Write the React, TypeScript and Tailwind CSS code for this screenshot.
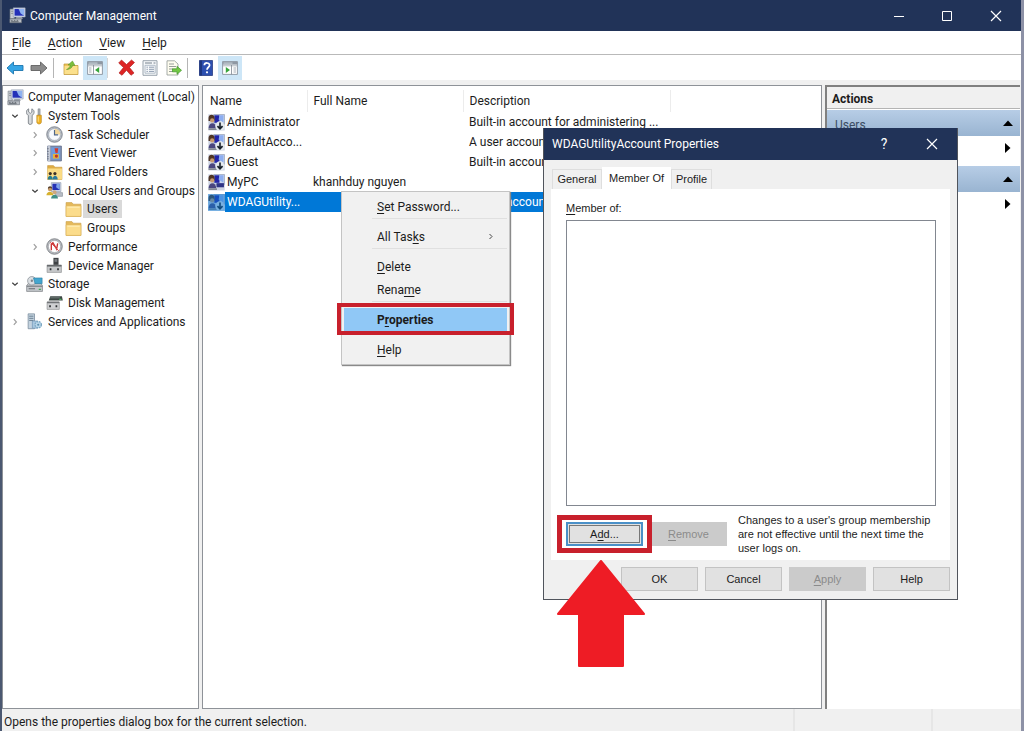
import React from "react";

type IconProps = { className?: string };

function ComputerIcon({ className = "size-4" }: IconProps) {
  return (
    <svg viewBox="0 0 16 16" className={className} aria-hidden="true">
      <path d="M1 2h4v9H1z" fill="#c9cdd2" stroke="#7d838c" strokeWidth=".6" />
      <path d="M2 4h2M2 6h2" stroke="#6f7680" strokeWidth=".7" />
      <path d="M4 .8h11.2v8.6H4z" fill="#dfe6f0" stroke="#8f9bb0" strokeWidth=".6" />
      <path d="M5.2 1.8h9v6.4h-9z" fill="#2430b8" />
      <path d="M9 1.8h5.2v6.4L11 6z" fill="#8fb3f0" />
      <path d="M7 9.4h5l1 2H6z" fill="#9aa1ab" />
      <path d="M.8 11.2h11v3.6H.8z" fill="#b8bdc4" stroke="#6b717a" strokeWidth=".6" />
      <path d="M2 12.6h1.4M4.6 12.6H6M7.2 12.6h1.4M2 13.8h7" stroke="#4c525b" strokeWidth=".7" />
    </svg>
  );
}

function ToolsIcon({ className = "size-4" }: IconProps) {
  return (
    <svg viewBox="0 0 16 16" className={className} aria-hidden="true">
      <path d="M2.500.8v3l1.500 1.300 1.500-1.300v-3C7 1.500 7.800 2.700 7.600 4.200 7.400 5.600 6.800 6.400 5.800 6.900v7.300c0 1.700-3.600 1.700-3.600 0V6.900C1.200 6.400.5 5.600.4 4.200.3 2.700 1 1.400 2.500.8z" fill="#d6d9dc" stroke="#757c82" strokeWidth=".8" />
      <path d="M11.300.8h2v6h-2z" fill="#a9afb5" stroke="#7f868c" strokeWidth=".5" />
      <path d="M10.200 6.800h4.200v6.400c0 2.400-4.200 2.400-4.200 0z" fill="#f0b323" stroke="#b47d12" strokeWidth=".6" />
      <path d="M11.500 8v5" stroke="#ffe08a" strokeWidth=".9" />
    </svg>
  );
}

function ClockIcon({ className = "size-4" }: IconProps) {
  return (
    <svg viewBox="0 0 16 16" className={className} aria-hidden="true">
      <circle cx="8" cy="8" r="7.300" fill="#b7bdc6" stroke="#757b84" strokeWidth=".8" />
      <circle cx="8" cy="8" r="5.500" fill="#f7fafe" stroke="#9aa2ad" strokeWidth=".5" />
      <path d="M8 8V2.500A5.500 5.500 0 0 1 13.500 8z" fill="#f2d79b" />
      <path d="M8 3.800V8.400h3.400" fill="none" stroke="#4f6788" strokeWidth="1.100" />
    </svg>
  );
}

function EventIcon({ className = "size-4" }: IconProps) {
  return (
    <svg viewBox="0 0 16 16" className={className} aria-hidden="true">
      <path d="M1.500 1h13v14h-13z" fill="#8190b0" stroke="#5b6885" strokeWidth=".7" />
      <path d="M1.500 1h2.500v14H1.500z" fill="#c6ccd8" />
      <path d="M5 2.200h8.300v11.500H5z" fill="#6d9be0" />
      <path d="M8 3h3.500l-.6 4.600H9z" fill="#d13a2c" />
      <path d="M6.500 8.500h5.600v4.300H6.500z" fill="#e7b53a" />
      <circle cx="9.800" cy="10.400" r="1.500" fill="#c2332a" />
      <path d="M1 3.500h1.600M1 6h1.600M1 8.500h1.600M1 11h1.600M1 13h1.600" stroke="#59606e" strokeWidth=".7" />
    </svg>
  );
}

function FolderIcon({ className = "size-4" }: IconProps) {
  return (
    <svg viewBox="0 0 16 16" className={className} aria-hidden="true">
      <path d="M1 1.500h5.500l1.300 1.500H15v11.500H1z" fill="#e5b95a" stroke="#c9a04c" strokeWidth=".6" />
      <path d="M1 4.500h14v10H1z" fill="#fbdc8b" stroke="#dcb053" strokeWidth=".5" />
      <path d="M2.200 5.800h11.600" stroke="#fff0bd" strokeWidth=".9" />
    </svg>
  );
}

function SharedIcon({ className = "size-4" }: IconProps) {
  return (
    <svg viewBox="0 0 16 16" className={className} aria-hidden="true">
      <path d="M1.500 1.500H7L8.500 3H15v11.500H1.500z" fill="#dfae45" stroke="#c39238" strokeWidth=".5" />
      <path d="M1.500 4.200H15v10.300H1.500z" fill="#fbdc85" />
      <circle cx="4" cy="9" r="1.500" fill="#3c3128" />
      <circle cx="8.400" cy="9" r="1.500" fill="#3c3128" />
      <path d="M1.600 14.600c0-4.600 4.700-4.600 4.700 0z" fill="#287d8c" />
      <path d="M6.200 14.600c0-4.600 4.800-4.600 4.800 0z" fill="#2b7aa0" />
    </svg>
  );
}

function UsersIcon({ className = "size-4" }: IconProps) {
  return (
    <svg viewBox="0 0 16 16" className={className} aria-hidden="true">
      <path d="M5 .6h9v8.400H5z" fill="#d7dfec" stroke="#8994aa" strokeWidth=".6" />
      <path d="M6 1.600h7v6H6z" fill="#2531b5" />
      <path d="M10 1.600h3v6L9.500 5z" fill="#7da2e8" />
      <path d="M9 10h6.500v3.500H9z" fill="#b9bec7" stroke="#777e8a" strokeWidth=".5" />
      <circle cx="3.800" cy="6.700" r="2.100" fill="#c49a6b" />
      <path d="M1.800 6.300c0-3 4-3 4 0L3.800 5.300z" fill="#503a28" />
      <path d="M.4 12.500c0-4.500 6.600-4.500 6.600 0z" fill="#d6b12f" />
      <circle cx="8" cy="9.600" r="1.900" fill="#cda77d" />
      <path d="M4.800 15.500c0-4.800 6.500-4.800 6.500 0z" fill="#3f8f86" />
    </svg>
  );
}

function PerformanceIcon({ className = "size-4" }: IconProps) {
  return (
    <svg viewBox="0 0 16 16" className={className} aria-hidden="true">
      <circle cx="8" cy="8" r="7.300" fill="#b9bcc1" stroke="#777b80" strokeWidth=".8" />
      <circle cx="8" cy="8" r="5.700" fill="#fff" stroke="#909499" strokeWidth=".5" />
      <path d="M5 11.500V5.500l1.500-1L10 10.500l1-5.500" fill="none" stroke="#c93434" strokeWidth="1.300" />
      <path d="M4 4l8 8" stroke="#d44" strokeWidth=".9" />
    </svg>
  );
}

function DeviceIcon({ className = "size-4" }: IconProps) {
  return (
    <svg viewBox="0 0 16 16" className={className} aria-hidden="true">
      <path d="M7 .8h4.800v7H7z" fill="#3f4245" />
      <path d="M8 2h2.600v2.500H8z" fill="#777b80" />
      <path d="M1 7.500h13.500v7H1z" fill="#c6c8ca" stroke="#8a8d90" strokeWidth=".6" />
      <path d="M1 7.500h13.500V9H1z" fill="#66696c" />
      <path d="M3.500 10.500h1.600v2H3.500zM10.500 10.500h1.600v2h-1.600z" fill="#2f3235" />
    </svg>
  );
}

function StorageIcon({ className = "size-4" }: IconProps) {
  return (
    <svg viewBox="0 0 16 16" className={className} aria-hidden="true">
      <path d="M.6 9l2-2.500h10.900l2 2.500v5.500H.6z" fill="#c3c6ca" stroke="#74787d" strokeWidth=".6" />
      <path d="M.8 9.600h14.500" stroke="#6b7075" strokeWidth=".9" />
      <path d="M2.500 12h6" stroke="#60666c" strokeWidth=".9" />
      <circle cx="5.500" cy="4.500" r="4" fill="#dce0e4" stroke="#878d94" strokeWidth=".7" />
      <circle cx="5.500" cy="4.500" r="1.100" fill="#7e858c" />
      <path d="M7 1.800h8.200v5.400H8.500z" fill="#43a6cf" stroke="#267799" strokeWidth=".5" />
      <path d="M12 12h2v1.200h-2z" fill="#3caa57" />
    </svg>
  );
}

function DiskIcon({ className = "size-4" }: IconProps) {
  return (
    <svg viewBox="0 0 16 16" className={className} aria-hidden="true">
      <path d="M4 2h11l.8 4H2.500z" fill="#3d4744" />
      <path d="M4 3.600h9" stroke="#83918c" strokeWidth=".7" />
      <path d="M12.500 4.500h2v1h-2z" fill="#52c46b" />
      <path d="M1 7.500h11.500v7H1z" fill="#cfd0d2" stroke="#8a8d90" strokeWidth=".6" />
      <path d="M1 7.200h11.500v1.500H1z" fill="#717477" />
      <path d="M3 10.500h1.600v2H3zM9 10.500h1.600v2H9z" fill="#2f3235" />
    </svg>
  );
}

function ServicesIcon({ className = "size-4" }: IconProps) {
  return (
    <svg viewBox="0 0 16 16" className={className} aria-hidden="true">
      <path d="M2 .8h6v14H2z" fill="#c4d3df" stroke="#75889a" strokeWidth=".7" />
      <path d="M3 3h4M3 5h4M3 7h4" stroke="#5c7285" strokeWidth=".8" />
      <path d="M6 7.500h5v6.800H6z" fill="#a9c8e0" stroke="#6b93b3" strokeWidth=".6" />
      <circle cx="11.500" cy="11" r="3" fill="#b9d7ea" stroke="#7ba6c2" strokeWidth="1.200" strokeDasharray="1.600 .8" />
      <circle cx="11.500" cy="11" r="1" fill="#5f8fae" />
    </svg>
  );
}

function AccountIcon({ disabled, selected }: { disabled?: boolean; selected?: boolean }) {
  return (
    <svg viewBox="0 0 16 16" className="size-[17px] shrink-0" aria-hidden="true">
      <path d="M.3.3h15.400v15.200H.3z" fill="#cdd3e2" />
      <path d="M5.500.5h10v9.500h-10z" fill="#c6d3ee" stroke="#96a0b4" strokeWidth=".6" />
      <path d="M6 1.200h4.800v7.100H6z" fill="#2224a6" />
      <path d="M10.800 1.200h3.700v7.100L10 5.200z" fill="#8daef0" />
      <path d="M8 8.600h7v3.900H8z" fill="#2e3486" />
      <path d="M.5 3.800c0-4 5.700-4 5.700 0v2.700H.5z" fill="#4e3425" />
      <circle cx="3.900" cy="6" r="2" fill="#c79a72" />
      <path d="M.5 13.500c0-6.500 7.200-6.500 7.200 0z" fill="#4a467f" />
      <path d="M.5 13.500h8v1.500h-8z" fill="#7f858f" />
      {disabled && (
        <>
          <circle cx="11.300" cy="11.300" r="4.500" fill="#e4e9ee" />
          <path d="M11.300 8v5.800M8.900 11.400l2.400 2.600 2.400-2.600" fill="none" stroke="#17202b" strokeWidth="1.500" />
        </>
      )}
      {selected && <path d="M0 0h16v16H0z" fill="#0a78d4" opacity=".5" />}
    </svg>
  );
}

function Chevron({ open }: { open?: boolean }) {
  return (
    <svg viewBox="0 0 8 8" className="size-2 shrink-0" aria-hidden="true">
      <path
        d={open ? "M1.300 2.800L4 5.300l2.700-2.500" : "M2.800 1.200L5.400 4 2.800 6.800"}
        fill="none"
        stroke={open ? "#404040" : "#a0a0a0"}
        strokeWidth="1.200"
      />
    </svg>
  );
}

function CloseIcon() {
  return (
    <svg viewBox="0 0 12 12" className="size-3" aria-hidden="true">
      <path d="M1 1l10 10M11 1L1 11" stroke="#fff" strokeWidth="1.200" />
    </svg>
  );
}

type Node = {
  label: string;
  icon: (p: IconProps) => React.ReactElement;
  pad: string;
  open?: boolean;
  leaf?: boolean;
  selected?: boolean;
};

const LEVEL1 = "pl-2";
const LEVEL2 = "pl-7";
const LEVEL3 = "pl-[47px]";

const TREE: Node[] = [
  { label: "System Tools", icon: ToolsIcon, pad: LEVEL1, open: true },
  { label: "Task Scheduler", icon: ClockIcon, pad: LEVEL2 },
  { label: "Event Viewer", icon: EventIcon, pad: LEVEL2 },
  { label: "Shared Folders", icon: SharedIcon, pad: LEVEL2 },
  { label: "Local Users and Groups", icon: UsersIcon, pad: LEVEL2, open: true },
  { label: "Users", icon: FolderIcon, pad: LEVEL3, leaf: true, selected: true },
  { label: "Groups", icon: FolderIcon, pad: LEVEL3, leaf: true },
  { label: "Performance", icon: PerformanceIcon, pad: LEVEL2 },
  { label: "Device Manager", icon: DeviceIcon, pad: LEVEL2, leaf: true },
  { label: "Storage", icon: StorageIcon, pad: LEVEL1, open: true },
  { label: "Disk Management", icon: DiskIcon, pad: LEVEL2, leaf: true },
  { label: "Services and Applications", icon: ServicesIcon, pad: LEVEL1 },
];

const ACCOUNTS = [
  { name: "Administrator", full: "", desc: "Built-in account for administering ...", disabled: true },
  { name: "DefaultAcco...", full: "", desc: "A user account managed by the s...", disabled: true },
  { name: "Guest", full: "", desc: "Built-in account for guest access t...", disabled: true },
  { name: "MyPC", full: "khanhduy nguyen", desc: "", disabled: false },
  { name: "WDAGUtility...", full: "", desc: "A user account managed and use...", disabled: true, selected: true },
];

function Key({ text, at }: { text: string; at: number }) {
  return (
    <span>
      {text.slice(0, at)}
      <span className="underline underline-offset-2">{text[at]}</span>
      {text.slice(at + 1)}
    </span>
  );
}

function TitleBar() {
  return (
    <header className="flex h-[31px] shrink-0 items-center bg-[#213358] pl-[7px] text-white">
      <ComputerIcon className="size-[17px]" />
      <h1 className="ml-1 flex-1">Computer Management</h1>
      <button aria-label="Minimize" className="flex h-full w-12 items-center justify-center">
        <svg viewBox="0 0 12 12" className="size-3"><path d="M1 6.500h10" stroke="#fff" /></svg>
      </button>
      <button aria-label="Maximize" className="flex h-full w-12 items-center justify-center">
        <svg viewBox="0 0 12 12" className="size-3"><path d="M1.500 1.500h9v9h-9z" fill="none" stroke="#fff" /></svg>
      </button>
      <button aria-label="Close" className="flex h-full w-[50px] items-center justify-center">
        <CloseIcon />
      </button>
    </header>
  );
}

function ArrowGlyph({ fill, stroke, d }: { fill: string; stroke: string; d: string }) {
  return (
    <svg viewBox="0 0 18 16" className="h-4 w-[18px]" aria-hidden="true">
      <path d={d} fill={fill} stroke={stroke} strokeWidth=".9" strokeLinejoin="round" />
    </svg>
  );
}

function PaneIcon({ flip }: { flip?: boolean }) {
  return (
    <svg viewBox="0 0 16 16" className="size-4" aria-hidden="true">
      <path d="M.6 1.600h14.800v12.800H.6z" fill="#fff" stroke="#7d8792" strokeWidth=".8" />
      <path d="M.6 1.600h14.800v3H.6z" fill="#8e98a3" />
      <path d="M1.500 3.100h9" stroke="#dbe2e8" strokeWidth=".8" />
      <path d="M.6 5.800h14.800" stroke="#9aa4ae" strokeWidth=".8" />
      {flip ? (
        <>
          <path d="M9.500 5v9.400" stroke="#7d8792" strokeWidth=".8" />
          <path d="M11.500 8h2.500M11.500 10h2.500M11.500 12h2.500" stroke="#7f8a96" strokeWidth=".7" />
          <path d="M3.800 7v6L8 10z" fill="#35a43a" />
        </>
      ) : (
        <>
          <path d="M6.500 5v9.400" stroke="#7d8792" strokeWidth=".8" />
          <path d="M2 8h2.500M2 10h2.500M2 12h2.500" stroke="#7f8a96" strokeWidth=".7" />
          <path d="M12.200 7v6L8 10z" fill="#35a43a" />
        </>
      )}
    </svg>
  );
}

function ToolButton({ label, active, children }: { label: string; active?: boolean; children: React.ReactNode }) {
  return (
    <button
      aria-label={label}
      className={
        active
          ? "flex h-6 w-6 items-center justify-center bg-[#cde6f7]"
          : "flex h-6 w-6 items-center justify-center"
      }
    >
      {children}
    </button>
  );
}

function Toolbar() {
  return (
    <div role="toolbar" className="flex h-[25px] shrink-0 items-center bg-white pl-[1px]">
      <ToolButton label="Back">
        <ArrowGlyph fill="#35a5e5" stroke="#1b75ae" d="M1 8l6.500-6v3.500H17v5H7.500V14z" />
      </ToolButton>
      <ToolButton label="Forward">
        <ArrowGlyph fill="#8b8b8b" stroke="#626262" d="M17 8l-6.500-6v3.500H1v5h9.500V14z" />
      </ToolButton>
      <span className="mr-[5px] ml-[2px] h-5 w-px bg-[#b5b5b5]" />
      <ToolButton label="Up one level">
        <svg viewBox="0 0 16 16" className="size-4">
          <path d="M1 4h5l1.500 1.500H15v9H1z" fill="#eec65c" stroke="#bd9434" strokeWidth=".7" />
          <path d="M1.500 6h13v8h-13z" fill="#fbe08c" />
          <path d="M3.500 9.500c2-.8 3.500-2.500 3.900-4.700L5 5l4.500-4L12 5.500 9.800 5.200C9.200 7.800 6.800 9.500 3.500 9.500z" fill="#7cc03c" stroke="#4f8f24" strokeWidth=".5" />
        </svg>
      </ToolButton>
      <ToolButton label="Show or hide console tree" active><PaneIcon /></ToolButton>
      <span className="mr-[6px] h-5 w-px bg-[#d5d5d5]" />
      <ToolButton label="Delete">
        <svg viewBox="0 0 17 17" className="size-[17px]">
          <path d="M3.500 1L8.500 5.500 13.500 1 16.500 3.500 11.500 8.500 16 14l-3 2.300-4.500-5-4.500 5L1 14l4.500-5.500L.7 4z" fill="#dd2424" stroke="#a81818" strokeWidth=".6" />
        </svg>
      </ToolButton>
      <ToolButton label="Properties">
        <svg viewBox="0 0 16 16" className="size-4">
          <path d="M1 .7h14v14.600H1z" fill="#f7f9fb" stroke="#8d98a4" strokeWidth=".9" />
          <path d="M3 3h7M11.500 3h2" stroke="#75808c" strokeWidth="1" />
          <path d="M3 5.300h10.200v7.900H3z" fill="none" stroke="#a1aebc" strokeWidth=".8" />
          <path d="M4.500 7.200h1.400M7 7.200h5M4.500 9.300h1.400M7 9.300h5M4.500 11.400h1.400M7 11.400h5" stroke="#71839b" strokeWidth=".8" />
        </svg>
      </ToolButton>
      <ToolButton label="Export list">
        <svg viewBox="0 0 16 16" className="size-4">
          <path d="M1 .8h7.500L12 4v11H1z" fill="#fffdf0" stroke="#8f9796" strokeWidth=".8" />
          <path d="M3 4h5M3 6.500h7M3 9h4M3 11.500h4" stroke="#8c9491" strokeWidth=".9" />
          <path d="M6.500 8.800H11V6.300l4.500 4-4.500 4v-2.500H6.500z" fill="#72c843" stroke="#3f932a" strokeWidth=".7" />
        </svg>
      </ToolButton>
      <span className="mr-[6px] ml-[1px] h-5 w-px bg-[#b5b5b5]" />
      <ToolButton label="Help">
        <svg viewBox="0 0 16 16" className="size-4">
          <path d="M1.500.5h13v15h-13z" fill="#2c4fb0" stroke="#1b2f75" strokeWidth=".7" />
          <path d="M1.500.5H4v15H1.500z" fill="#1e367f" />
          <path d="M6.300 5.300c.2-3.200 5.400-3 5.300 0-.1 2-2.600 2-2.600 4.500" fill="none" stroke="#fff" strokeWidth="1.700" />
          <circle cx="9" cy="12.300" r="1.100" fill="#fff" />
        </svg>
      </ToolButton>
      <ToolButton label="Show or hide action pane" active><PaneIcon flip /></ToolButton>
    </div>
  );
}

function Tree() {
  return (
    <nav className="border border-[#8e9298] bg-white">
      <ul className="mt-[2px] grid h-[243px] auto-rows-fr whitespace-nowrap">
        <li className="flex items-center pl-1">
          <ComputerIcon className="size-[17px] shrink-0" />
          <span className="ml-1">Computer Management (Local)</span>
        </li>
        {TREE.map(({ label, icon: Icon, pad, open, leaf, selected }) => (
          <li key={label} className={"flex items-center " + pad}>
            {leaf ? <span className="w-2 shrink-0" /> : <Chevron open={open} />}
            <Icon className="mr-[5px] ml-[7px] size-[17px] shrink-0" />
            <span className={selected ? "-my-px -ml-1 bg-[#d9d9d9] pr-1 pl-1 leading-[18px]" : ""}>{label}</span>
          </li>
        ))}
      </ul>
    </nav>
  );
}

function AccountTable() {
  return (
    <main className="overflow-hidden border border-[#8e9298] bg-white">
      <table className="mt-1 w-full table-fixed border-collapse whitespace-nowrap text-left">
        <colgroup>
          <col className="w-[104px]" />
          <col className="w-[156px]" />
          <col className="w-[207px]" />
          <col />
        </colgroup>
        <thead>
          <tr className="h-[22px]">
            <th className="border-r border-[#ececec] p-0 pl-[7px] font-normal">Name</th>
            <th className="border-r border-[#ececec] p-0 pl-[6px] font-normal">Full Name</th>
            <th className="border-r border-[#ececec] p-0 pl-[6px] font-normal">Description</th>
            <th className="p-0"></th>
          </tr>
        </thead>
        <tbody>
          {ACCOUNTS.map((a) => (
            <tr key={a.name} className="h-5">
              <td className="p-0">
                <div className="flex items-center pl-[5px]">
                  <AccountIcon disabled={a.disabled} selected={a.selected} />
                  <span className={a.selected ? "flex-1 bg-[#0078d7] pl-[2px] leading-5 text-white" : "pl-[2px] leading-5"}>
                    {a.name}
                  </span>
                </div>
              </td>
              <td className={a.selected ? "bg-[#0078d7] p-0" : "p-0 pl-[6px]"}>{a.full}</td>
              <td className={a.selected ? "bg-[#0078d7] p-0 pl-[6px] text-white" : "p-0 pl-[6px]"}>{a.desc}</td>
              <td className="p-0"></td>
            </tr>
          ))}
        </tbody>
      </table>
    </main>
  );
}

function ActionHeading({ children }: { children?: React.ReactNode }) {
  return (
    <button className="flex h-[26px] w-full items-center justify-between bg-linear-to-b from-[#b7cde6] to-[#99b4d1] pr-[7px] pl-2 text-[#3c4d63]">
      <span className="pt-1">{children}</span>
      <svg viewBox="0 0 10 6" className="h-[6px] w-[10px]" aria-hidden="true"><path d="M0 6l5-5.500L10 6z" fill="#000" /></svg>
    </button>
  );
}

function ActionMore() {
  return (
    <button aria-label="More Actions" className="flex h-6 w-full items-center justify-end pr-[9px]">
      <svg viewBox="0 0 6 10" className="h-[10px] w-[6px]" aria-hidden="true"><path d="M0 0l5.500 5L0 10z" fill="#000" /></svg>
    </button>
  );
}

function ActionsPane() {
  return (
    <aside className="border-t-2 border-l-2 border-[#808080] bg-white">
      <h2 className="mb-px h-[22px] border-b border-[#b4b4b4] bg-[#f0f0f0] pl-[5px] leading-[24px] font-bold">Actions</h2>
      <ActionHeading>Users</ActionHeading>
      <ActionMore />
      <div className="h-[6px]" />
      <ActionHeading />
      <ActionMore />
    </aside>
  );
}

function MenuItem({ text, at, arrow, active }: { text: string; at: number; arrow?: boolean; active?: boolean }) {
  return (
    <button
      role="menuitem"
      className={
        active
          ? "flex h-[23px] w-full items-center justify-between bg-[#90c8f6] pr-3 pl-[33px] font-bold"
          : "flex h-[23px] w-full items-center justify-between pr-3 pl-[33px]"
      }
    >
      <Key text={text} at={at} />
      {arrow && (
        <svg viewBox="0 0 8 8" className="size-2" aria-hidden="true">
          <path d="M2.500 1l2.500 2.500L2.500 6" fill="none" stroke="#444" />
        </svg>
      )}
    </button>
  );
}

function MenuRule() {
  return <div role="separator" className="ml-7 h-[7px] border-t border-[#e0e0e0]" />;
}

function ContextMenu() {
  return (
    <div
      role="menu"
      className="absolute top-[191px] left-[339px] w-[169px] border border-[#c4c4c4] bg-[#f1f1f1] px-[2px] py-[3px] shadow-[1px_1px_1px_#8a8a8a]"
    >
      <MenuItem text="Set Password..." at={0} />
      <MenuRule />
      <MenuItem text="All Tasks" at={7} arrow />
      <MenuRule />
      <MenuItem text="Delete" at={0} />
      <MenuItem text="Rename" at={4} />
      <MenuRule />
      <MenuItem text="Properties" at={1} active />
      <MenuRule />
      <MenuItem text="Help" at={0} />
      <div className="pointer-events-none absolute -inset-x-[5px] top-[111px] h-8 border-4 border-[#c8202c]" />
    </div>
  );
}

const PUSH = "h-6 w-[77px] border border-[#c3c3c3] bg-[#e1e1e1]";
const PUSH_OFF = "h-6 w-[77px] bg-[#cbcbcb] text-[#8b8b8b]";

function PropertiesDialog() {
  return (
    <section
      role="dialog"
      aria-label="WDAGUtilityAccount Properties"
      className="absolute top-[128px] left-[541px] w-[415px] border border-t-0 border-[#50545c] bg-[#f0f0f0] font-['Liberation_Sans',Arial,sans-serif] text-[11px]"
    >
      <header className="flex h-8 items-center bg-[#213358] pl-2 font-[Roboto,'Open_Sans',sans-serif] text-xs text-white">
        <h2 className="flex-1">WDAGUtilityAccount Properties</h2>
        <button aria-label="Help" className="h-full w-12 text-sm">?</button>
        <button aria-label="Close" className="mr-[1px] flex h-full w-12 items-center justify-center"><CloseIcon /></button>
      </header>
      <div className="px-[7px] pt-[7px] pb-2">
        <div role="tablist" className="flex items-end pl-[1px]">
          <button role="tab" aria-selected="false" className="h-5 w-[50px] border border-b-0 border-[#dedede]">General</button>
          <button role="tab" aria-selected="true" className="h-[22px] w-[69px] bg-white">Member Of</button>
          <button role="tab" aria-selected="false" className="h-5 w-[41px] border border-b-0 border-[#dedede]">Profile</button>
        </div>
        <div role="tabpanel" className="bg-white pt-3 pr-[14px] pb-[5px] pl-[15px]">
          <label htmlFor="member-list" className="block h-[19px] leading-[15px]">
            <Key text="Member of:" at={0} />
          </label>
          <select id="member-list" multiple className="block h-[286px] w-full appearance-none rounded-none border border-[#828790] bg-white" />
          <div className="mt-[7px] flex h-[42px] items-center">
            <div className="relative">
              <button className="flex h-6 w-[77px] items-center justify-center border-2 border-[#4a90c8] bg-[#e1e1e1] outline-1 -outline-offset-4 outline-[#777777]">
                <Key text="Add..." at={1} />
              </button>
              <div className="pointer-events-none absolute -inset-x-[9px] -inset-y-[7px] border-5 border-[#c8202c]" />
              <svg viewBox="0 0 88 107" className="pointer-events-none absolute top-[38px] -left-[9px] h-[107px] w-[88px]" aria-hidden="true">
                <path d="M44 1L87 54H66v52H22V54H1z" fill="#ee1c25" stroke="#ee1c25" strokeWidth="2" strokeLinejoin="round" />
              </svg>
            </div>
            <button disabled className={PUSH_OFF + " ml-[7px]"}><Key text="Remove" at={0} /></button>
            <p className="ml-[11px] flex-1 leading-[14px] whitespace-nowrap">
              Changes to a user's group membership
              <br />
              are not effective until the next time the
              <br />
              user logs on.
            </p>
          </div>
        </div>
        <div className="mt-[7px] flex justify-end gap-[7px]">
          <button className={PUSH}>OK</button>
          <button className={PUSH}>Cancel</button>
          <button disabled className={PUSH_OFF}><Key text="Apply" at={0} /></button>
          <button className={PUSH}>Help</button>
        </div>
      </div>
    </section>
  );
}

export default function App() {
  return (
    <div className="relative flex h-screen flex-col overflow-hidden border-r-3 border-l-2 border-r-[#8d91a6] border-l-[#4b5871] bg-[#f0f0f0] font-[Roboto,'Open_Sans',sans-serif] text-xs text-[#1c1c1c]">
      <TitleBar />
      <nav className="flex h-6 shrink-0 items-center gap-[17px] border-b border-[#b9b9b9] bg-white pl-[10px]">
        <button><Key text="File" at={0} /></button>
        <button><Key text="Action" at={0} /></button>
        <button><Key text="View" at={0} /></button>
        <button><Key text="Help" at={0} /></button>
      </nav>
      <Toolbar />
      <div className="mt-[5px] grid min-h-0 flex-1 grid-cols-[197px_minmax(0,1fr)_195px] gap-[3px] pr-[1px]">
        <Tree />
        <AccountTable />
        <ActionsPane />
      </div>
      <footer className="flex h-[22px] shrink-0 items-center pl-[2px]">
        <span className="flex-1 pt-1">Opens the properties dialog box for the current selection.</span>
        <span className="h-full w-[138px] border-l-2 border-[#e6e6e6]" />
        <span className="h-full w-[90px] border-l-2 border-[#e6e6e6]" />
      </footer>
      <ContextMenu />
      <PropertiesDialog />
    </div>
  );
}
